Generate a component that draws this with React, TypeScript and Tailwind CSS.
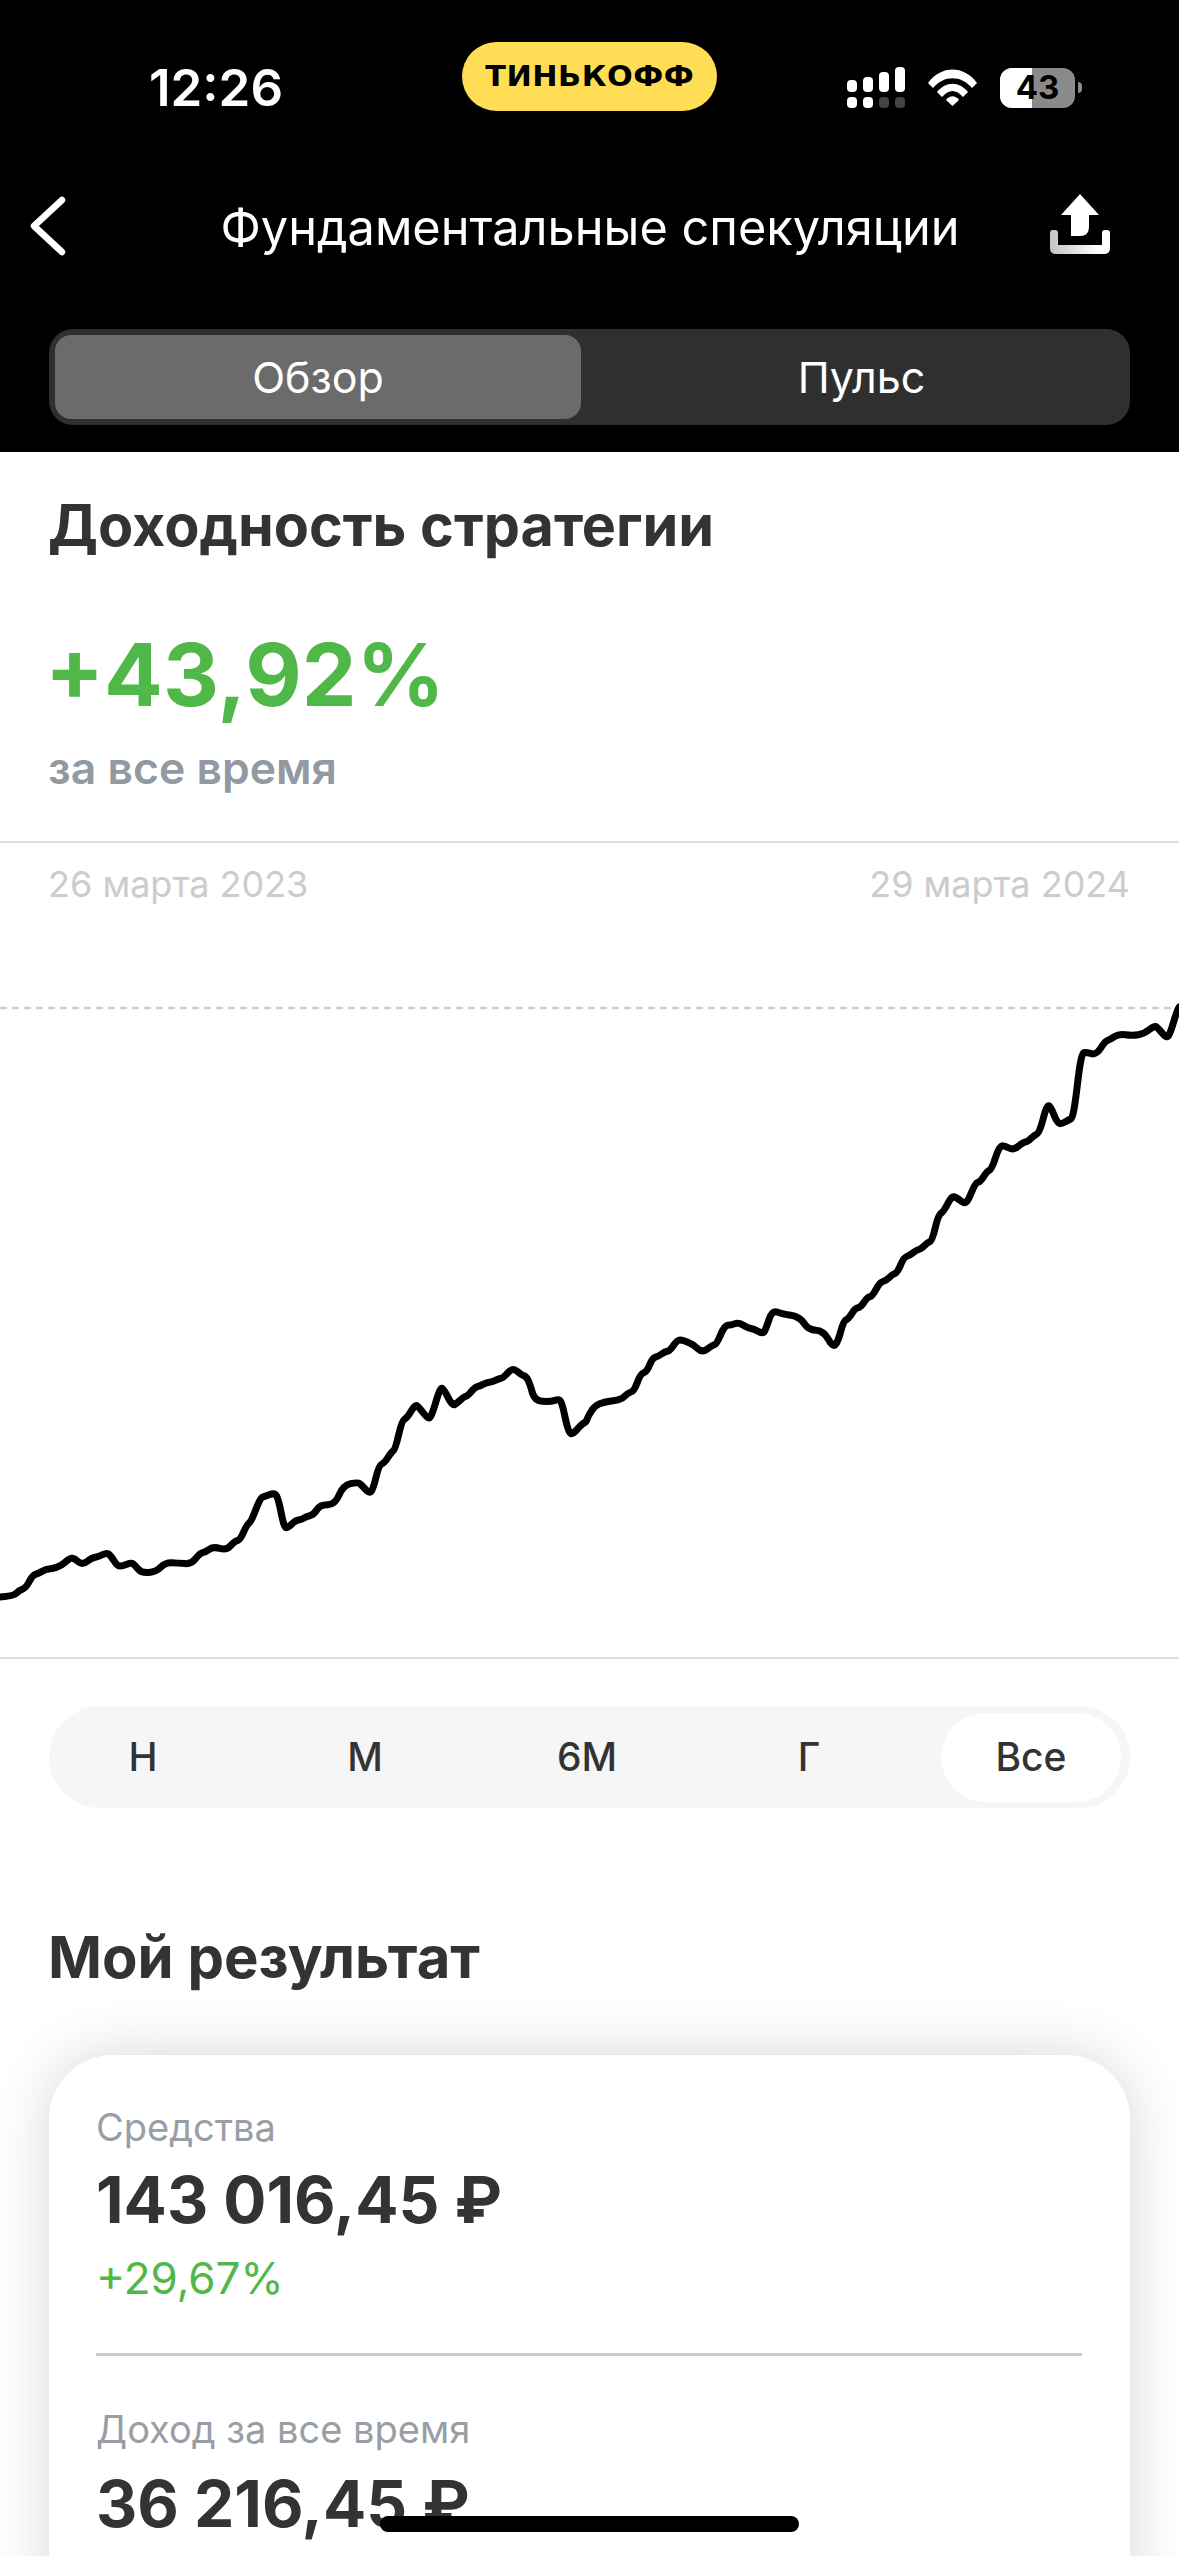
import React from 'react';

// traced from the reference crops, converted to page coordinates below
const leftTrace = [
  [0, 1516], [35, 1514], [50, 1500], [68, 1494], [85, 1464], [100, 1460], [120, 1450], [135, 1449], [160, 1442], [183, 1423],
  [195, 1425], [215, 1440], [240, 1423], [258, 1420], [278, 1411], [288, 1416], [307, 1443], [320, 1442], [343, 1434], [352, 1440],
  [370, 1459], [408, 1456], [432, 1434], [465, 1435], [500, 1438], [522, 1412], [537, 1409], [557, 1396], [592, 1405], [612, 1384],
  [628, 1380], [645, 1344], [657, 1336], [680, 1280], [692, 1277], [718, 1268], [728, 1285], [742, 1350], [752, 1352], [772, 1334],
  [788, 1332], [800, 1325], [820, 1320], [837, 1296], [875, 1297], [897, 1250], [935, 1243], [945, 1250], [965, 1270], [975, 1260],
  [990, 1203], [1005, 1197], [1022, 1172], [1033, 1165], [1050, 1097], [1064, 1090], [1085, 1058], [1095, 1065], [1120, 1095], [1130, 1080],
  [1150, 1018], [1160, 1022], [1182, 1062], [1195, 1055], [1212, 1040], [1222, 1038], [1240, 1018], [1255, 1014], [1272, 1006], [1285, 1005],
  [1305, 997], [1315, 995], [1337, 973], [1350, 978], [1362, 988], [1375, 992], [1385, 1010], [1397, 1050], [1438, 1052], [1462, 1045],
  [1470, 1060], [1485, 1125], [1497, 1130], [1520, 1105], [1532, 1100],
];

const rightTrace = [
  [20, 1375], [38, 1340], [65, 1328], [108, 1322], [125, 1302], [142, 1296], [158, 1245], [175, 1238], [190, 1197], [205, 1192],
  [222, 1178], [235, 1176], [255, 1142], [270, 1144], [295, 1155], [320, 1182], [345, 1160], [358, 1155], [378, 1100], [395, 1098],
  [415, 1090], [440, 1107], [455, 1110], [478, 1124], [485, 1115], [503, 1053], [530, 1065], [575, 1073], [598, 1113], [637, 1115],
  [662, 1165], [675, 1150], [690, 1085], [703, 1080], [720, 1048], [735, 1045], [752, 1015], [765, 1012], [785, 970], [800, 966],
  [818, 946], [830, 942], [848, 895], [862, 890], [880, 874], [893, 870], [910, 850], [922, 846], [938, 768], [952, 758],
  [972, 712], [985, 715], [1008, 735], [1018, 720], [1035, 672], [1048, 668], [1065, 638], [1078, 630], [1098, 560], [1112, 560],
  [1135, 574], [1160, 550], [1172, 548], [1190, 528], [1203, 522], [1222, 438], [1232, 442], [1250, 494], [1262, 494], [1280, 482],
  [1292, 476], [1312, 282], [1325, 280], [1352, 288], [1375, 246], [1388, 242], [1410, 224], [1445, 230], [1478, 224], [1503, 200],
  [1512, 205], [1535, 238], [1545, 225], [1565, 146], [1572, 142],
];

const chartPoints = [
  ...leftTrace.map(([x, y]) => [x / 2.613, 960 + y / 2.376]),
  ...rightTrace.map(([x, y]) => [580 + x / 2.618, 960 + y / 3]),
];

// rounds the traced corners with quadratic joins
const buildPath = (pts: number[][]) => {
  let d = `M${pts[0][0].toFixed(1)} ${pts[0][1].toFixed(1)}`;
  for (let i = 1; i < pts.length - 1; i++) {
    const mx = (pts[i][0] + pts[i + 1][0]) / 2;
    const my = (pts[i][1] + pts[i + 1][1]) / 2;
    d += ` Q${pts[i][0].toFixed(1)} ${pts[i][1].toFixed(1)} ${mx.toFixed(1)} ${my.toFixed(1)}`;
  }
  const last = pts[pts.length - 1];
  return d + ` L${last[0].toFixed(1)} ${last[1].toFixed(1)}`;
};

const StatusIcons = () => (
  <div className="flex items-center">
    <svg width="58" height="41" viewBox="0 0 58 41" fill="#fff">
      <rect x="0" y="13" width="10" height="12" rx="4" />
      <rect x="16" y="10" width="10" height="15" rx="4" />
      <rect x="32" y="5" width="10" height="20" rx="4" />
      <rect x="48" y="0" width="10" height="25" rx="4" />
      <rect x="0" y="30" width="10" height="11" rx="4" />
      <rect x="16" y="30" width="10" height="11" rx="4" />
      <rect x="32" y="30" width="10" height="11" rx="4" fill="#444" />
      <rect x="48" y="30" width="10" height="11" rx="4" fill="#444" />
    </svg>
    <svg className="ml-[23px]" width="49" height="37" viewBox="0 0 49 37" fill="#fff">
      <path d="M0 14 C13 -4 36 -4 49 14 L44 19 C33 6 16 6 5 19 Z" />
      <path d="M9 23 C18 12 31 12 40 23 L35 28 C28 20 21 20 14 28 Z" />
      <path d="M18 31 C22 26 27 26 31 31 L24.5 37 Z" />
    </svg>
    <div className="relative ml-[23px] flex h-10 w-[75px] items-center justify-center overflow-hidden rounded-[12px] bg-[#8a8a8a]">
      <div className="absolute inset-y-0 left-0 w-8 bg-white" />
      <span className="relative text-[33px] font-bold leading-none text-black">43</span>
    </div>
    <div className="ml-[3px] h-[11px] w-1 rounded-r-full bg-[#8a8a8a]" />
  </div>
);

const Period = ({ label, active }: { label: string; active?: boolean }) => (
  <div
    className={
      active
        ? 'flex h-[89px] w-[180px] items-center justify-center rounded-full bg-white text-[39px] font-medium text-[#333]'
        : 'flex h-[89px] w-[180px] items-center justify-center rounded-full text-[39px] font-medium text-[#333]'
    }
  >
    {label}
  </div>
);

export default function App() {
  return (
    <div className="relative h-[2556px] w-[1179px] overflow-hidden bg-white font-['Inter',sans-serif]">
      {/* Dark header */}
      <div className="h-[452px] bg-black px-[49px] text-white">
        <div className="flex h-[160px] items-start">
          <div className="w-[413px] pl-[100px] pt-[59px] text-[51px] font-semibold leading-[58px]">12:26</div>
          <div className="mt-[42px] flex h-[69px] w-[255px] items-center justify-center rounded-full bg-[#ffdd55]">
            <span className="scale-x-[1.08] text-[28px] font-bold leading-none tracking-[0.5px] text-black font-['DejaVu_Sans',sans-serif]">ТИНЬКОФФ</span>
          </div>
          <div className="ml-[130px] mt-[67px]">
            <StatusIcons />
          </div>
        </div>

        <div className="-mx-[49px] mt-[34px] grid h-[64px] grid-cols-[1fr_auto_1fr] items-center pl-[30px] pr-[29px]">
          <svg width="36" height="60" viewBox="0 0 36 60" fill="none" stroke="#fff" strokeWidth="6.5" strokeLinecap="round" strokeLinejoin="round">
            <path d="M32 4 L4 30 L32 56" />
          </svg>
          <div className="pt-[5px] text-[48.7px] leading-none text-white">Фундаментальные спекуляции</div>
          <svg className="mb-1 mr-10 justify-self-end" width="60" height="60" viewBox="0 0 60 60" fill="#fff">
            <defs>
              <linearGradient id="tray" x1="0" x2="1" y1="0" y2="0">
                <stop offset="0" stopColor="#c4c4c4" />
                <stop offset="0.8" stopColor="#ffffff" />
              </linearGradient>
            </defs>
            <path d="M30 0 L49 21 L39 21 L39 33 Q39 42 30 42 L21 42 L21 21 L11 21 Z" />
            <path
              d="M0 39 Q0 36 3 36 H5 Q8 36 8 39 V51 H52 V39 Q52 36 55 36 H57 Q60 36 60 39 V54 Q60 60 54 60 H6 Q0 60 0 54 Z"
              fill="url(#tray)"
            />
          </svg>
        </div>

        <div className="mt-[71px] flex h-24 rounded-[24px] bg-[#2f2f2f] p-[6px] text-[43px] leading-none">
          <div className="flex w-[526px] items-center justify-center rounded-[16px] bg-[#6b6b6b]">Обзор</div>
          <div className="flex flex-1 items-center justify-center pl-[18px]">Пульс</div>
        </div>
      </div>

      {/* Strategy return */}
      <div className="px-12">
        <h1 className="mt-[40px] text-[57.5px] font-bold leading-[66px] text-[#333]">Доходность стратегии</h1>
        <div className="-ml-[3px] mt-[67px] text-[87px] font-bold leading-[100px] text-[#50b848]">+43,92%</div>
        <div className="mt-[18px] text-[44.5px] font-semibold leading-[50px] text-[#9299a2]">за все время</div>
      </div>

      {/* Chart */}
      <div className="mt-[48px] border-y-2 border-[#dddddd]">
        <div className="flex justify-between pl-12 pr-[49px] pt-[19px] text-[36px] leading-[44px] text-[#cccccc]">
          <span>26 марта 2023</span>
          <span>29 марта 2024</span>
        </div>
        <svg className="mt-[53px] block" width="1179" height="698" viewBox="0 960 1179 698" fill="none">
          <path d="M0 1009 H1179" stroke="#d0d0d0" strokeWidth="2.5" strokeDasharray="7 5" />
          <path d={buildPath(chartPoints)} stroke="#000" strokeWidth="7" strokeLinecap="round" strokeLinejoin="round" />
        </svg>
      </div>

      {/* Period selector */}
      <div className="mx-[49px] mt-[47px] flex h-[102px] items-center justify-between rounded-full bg-[#f6f6f6] pl-1 pr-[9px]">
        <Period label="Н" />
        <Period label="М" />
        <Period label="6М" />
        <Period label="Г" />
        <Period label="Все" active />
      </div>

      {/* My result */}
      <h2 className="ml-12 mt-[116px] text-[58px] font-bold leading-[66px] text-[#333]">Мой результат</h2>
      <div className="mx-[49px] mt-[65px] h-[700px] rounded-[64px] bg-white pl-[47px] pr-12 pt-[49px] shadow-[0_0_60px_rgba(0,0,0,0.16)]">
        <div className="text-[38px] leading-[46px] text-[#999ea6]">Средства</div>
        <div className="mt-[12px] text-[64px] font-bold leading-[76px] text-[#333]">143 016,45 ₽</div>
        <div className="mt-[16px] text-[44px] leading-[48px] text-[#50b848]">+29,67%</div>
        <div className="mt-[51px] h-[3px] bg-[#cccccc]" />
        <div className="mt-[50px] text-[38px] leading-[46px] text-[#999ea6]">Доход за все время</div>
        <div className="mt-[14px] text-[64px] font-bold leading-[76px] text-[#333]">36 216,45 ₽</div>
      </div>

      {/* Home indicator */}
      <div className="absolute left-[380px] top-[2516px] h-4 w-[419px] rounded-full bg-black" />
    </div>
  );
}
